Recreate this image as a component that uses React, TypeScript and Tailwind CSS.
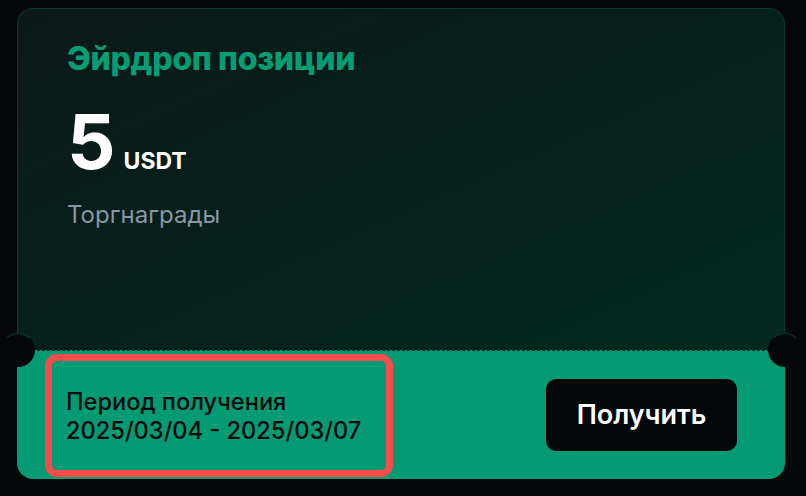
export default function App() {
  return (
    <div className="min-h-[496px] w-[806px] bg-[#04080b] pt-2 pl-[17px] font-['Inter','Liberation_Sans',sans-serif]">
      <div className="relative w-[768px]">
        <section className="h-[342px] rounded-t-[16px] border border-b-0 border-[#0b3a2c] bg-linear-to-br from-[#0a1918] via-[#06201b] to-[#042a1f] pt-[30px] pl-[49px]">
          <h2 className="text-[32px] leading-[40px] font-extrabold tracking-[-0.01em] text-[#069c74]">
            Эйрдроп позиции
          </h2>
          <div className="mt-[24px] flex items-baseline gap-[8px] text-white">
            <span className="text-[76px] leading-[76px] font-bold">5</span>
            <span className="text-[23px] font-bold">USDT</span>
          </div>
          <p className="mt-[21px] text-[24px] leading-[30px] text-[#8797a5]">Торгнаграды</p>
        </section>

        <section className="flex h-[129px] items-center justify-between rounded-b-[16px] border-t border-dashed border-[#0a2a22] bg-[#039a74] pr-[48px] pl-[28px]">
          <div className="mb-[2px] flex h-[123px] w-[348px] flex-col justify-center self-end rounded-[12px] border-[7px] border-[#f44d4b] pl-[14px] text-[23.6px] leading-[29px] font-medium text-[#05090c]">
            <span>Период получения</span>
            <span>2025/03/04 - 2025/03/07</span>
          </div>
          <button className="h-[72px] w-[191px] rounded-[10px] bg-[#04080b] text-[27px] font-semibold text-white">
            Получить
          </button>
        </section>

        <div className="absolute top-[325px] left-[-16px] h-[34px] w-[34px] rounded-full border border-[#04080b] border-t-[#0b3a2c] bg-[#04080b]" />
        <div className="absolute top-[325px] right-[-17px] h-[34px] w-[34px] rounded-full border border-[#04080b] border-t-[#0b3a2c] bg-[#04080b]" />
      </div>
    </div>
  );
}
